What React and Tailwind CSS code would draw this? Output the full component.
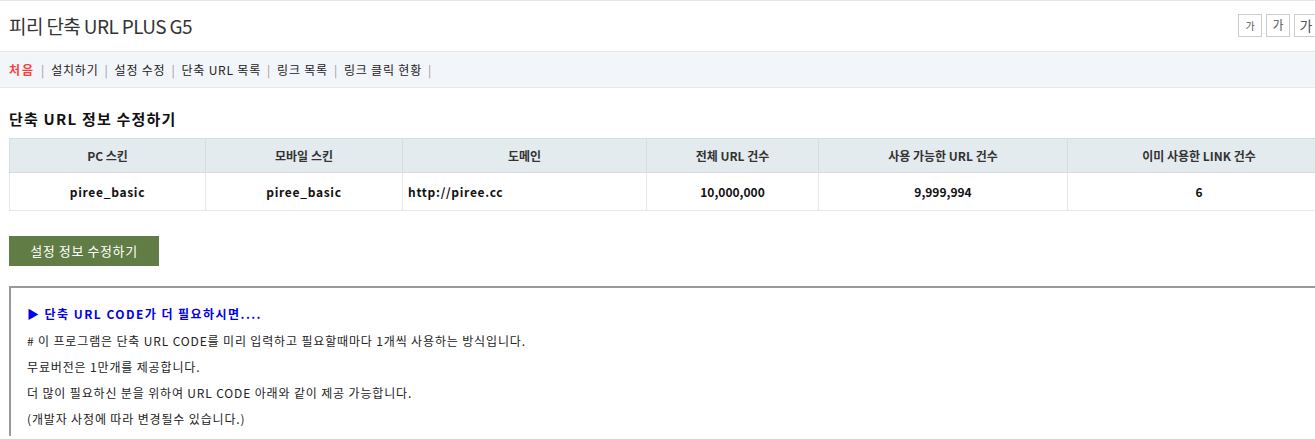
import React from "react";

const font = { fontFamily: '"Noto Sans CJK KR", "Noto Sans", sans-serif' };

function Nav() {
  const items = ["설치하기", "설정 수정", "단축 URL 목록", "링크 목록", "링크 클릭 현황"];
  return (
    <div className="h-[37px] bg-[#f2f5f9] border-y border-[#e4e6ea] flex items-center pl-[9px] text-[12px] text-[#222] tracking-[0.8px]">
      <span className="text-[#ff3d3d] font-bold tracking-[2px]">처음</span>
      {items.map((t) => (
        <React.Fragment key={t}>
          <span className="text-[#999] mx-[6px]">|</span>
          <span>{t}</span>
        </React.Fragment>
      ))}
      <span className="text-[#999] mx-[6px]">|</span>
    </div>
  );
}

export default function App() {
  const heads = ["PC 스킨", "모바일 스킨", "도메인", "전체 URL 건수", "사용 가능한 URL 건수", "이미 사용한 LINK 건수"];
  const widths = ["w-[196px]", "w-[197px]", "w-[244px]", "w-[172px]", "w-[249px]", "w-[263px]"];
  return (
    <div className="w-[1315px] h-[439px] overflow-hidden bg-white" style={font}>
      <div className="w-[1340px]">
        <div className="border-t border-[#e4e6ea] h-[51px] flex items-center justify-between pl-[9px]">
          <div className="text-[19px] text-[#333] tracking-[-0.6px] mt-[1px]">피리 단축 URL PLUS G5</div>
          <div className="flex gap-[4px] pr-[22px] mt-[-2px]">
            <div className="w-[24px] h-[23px] border border-[#ccc] flex items-center justify-center text-[10px] text-[#555]">가</div>
            <div className="w-[24px] h-[23px] border border-[#ccc] flex items-center justify-center text-[12px] text-[#555]">가</div>
            <div className="w-[24px] h-[23px] border border-[#ccc] flex items-center justify-center text-[14px] text-[#555]">가</div>
          </div>
        </div>
        <Nav />
        <div className="pl-[9px]">
          <div className="text-[15px] font-bold text-[#111] pt-[20px] h-[50px] leading-[22px] tracking-[1.2px]">단축 URL 정보 수정하기</div>
          <table className="border-collapse text-[12px]">
            <thead>
              <tr className="h-[34px] bg-[#e4ebef]">
                {heads.map((h, i) => (
                  <th key={h} className={`${widths[i]} border border-[#d3dde3] font-bold text-[#333] text-center`}>{h}</th>
                ))}
              </tr>
            </thead>
            <tbody>
              <tr className="h-[38px] font-bold text-[#111]">
                <td className="border border-[#e4e6ea] text-center tracking-[0.7px]">piree_basic</td>
                <td className="border border-[#e4e6ea] text-center tracking-[0.7px]">piree_basic</td>
                <td className="border border-[#e4e6ea] text-left pl-[5px] tracking-[0.7px]">http://piree.cc</td>
                <td className="border border-[#e4e6ea] text-center">10,000,000</td>
                <td className="border border-[#e4e6ea] text-center">9,999,994</td>
                <td className="border border-[#e4e6ea] text-center">6</td>
              </tr>
            </tbody>
          </table>
          <div className="mt-[25px] w-[150px] h-[30px] bg-[#627c45] text-white text-[13px] tracking-[0.6px] flex items-center justify-center">설정 정보 수정하기</div>
          <div className="mt-[20px] border-t-2 border-l-2 border-[#999] pl-[16px] pt-[17px] text-[12px] text-[#222] tracking-[0.85px]">
            <div className="text-[#0000ee] font-bold h-[27px] leading-[18px] tracking-[1.45px]">▶ 단축 URL CODE가 더 필요하시면....</div>
            <div className="h-[26px] leading-[18px]"># 이 프로그램은 단축 URL CODE를 미리 입력하고 필요할때마다 1개씩 사용하는 방식입니다.</div>
            <div className="h-[26px] leading-[18px]">무료버전은 1만개를 제공합니다.</div>
            <div className="h-[26px] leading-[18px]">더 많이 필요하신 분을 위하여 URL CODE 아래와 같이 제공 가능합니다.</div>
            <div className="h-[26px] leading-[18px]">(개발자 사정에 따라 변경될수 있습니다.)</div>
          </div>
        </div>
      </div>
    </div>
  );
}
